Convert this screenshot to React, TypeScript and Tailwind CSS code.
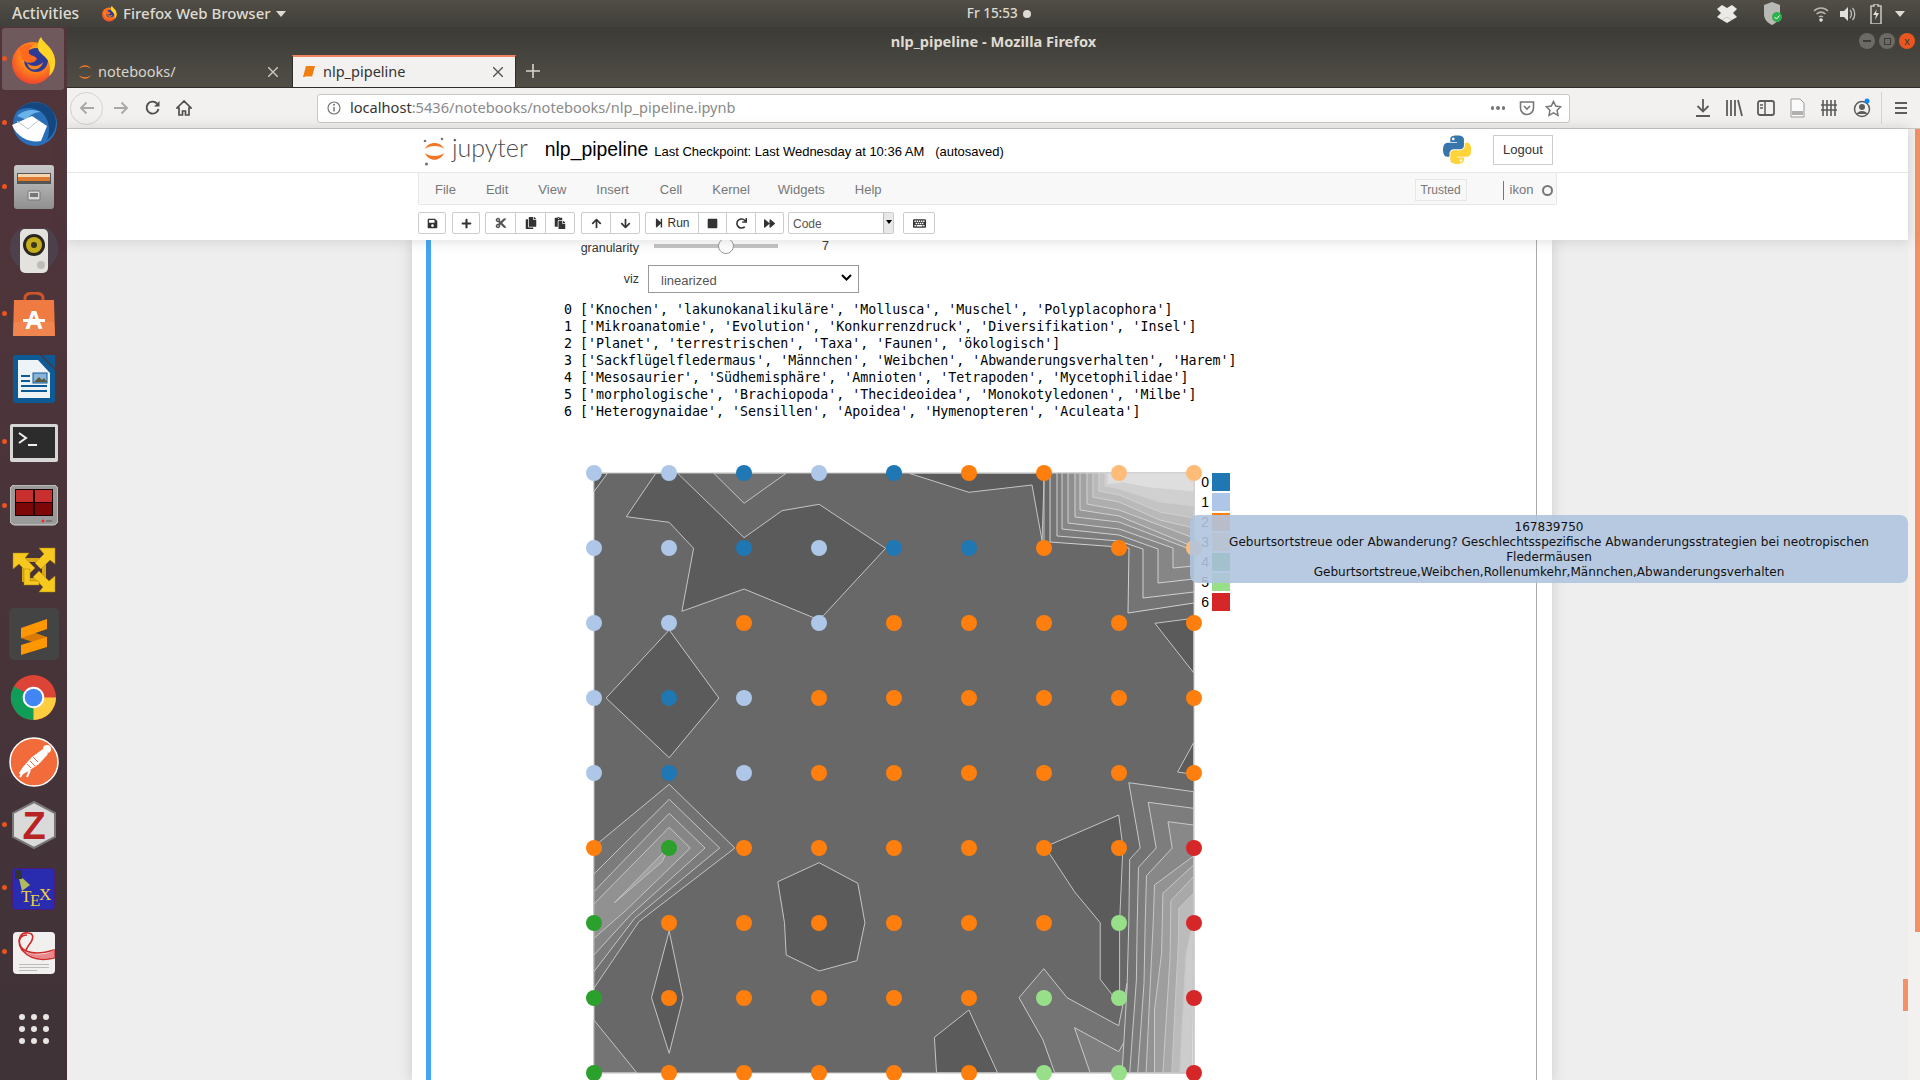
import React from "react";
import { FaSave, FaPlus, FaCut, FaCopy, FaPaste, FaArrowUp, FaArrowDown, FaStepForward, FaStop, FaRedo, FaForward, FaKeyboard } from "react-icons/fa";

type P = [number, number];
const z7 = (p: P): P => [580 + p[0] / 2.376, 450 + p[1] / 3];
const z8 = (p: P): P => [580 + p[0] / 2.376, 750 + p[1] / 3];
const str = (pts: P[]) => pts.map((p) => `${p[0].toFixed(1)},${p[1].toFixed(1)}`).join(" ");

const DARK = "#5b5b5b";
const darkPolys: P[][] = [
  [[33, 70], [65, 70], [33, 125]].map((p) => z7(p as P)),
  [[180, 70], [110, 200], [212, 217], [270, 295], [242, 484], [390, 417], [555, 503], [578, 497], [726, 295], [568, 163], [480, 182], [390, 263], [232, 70]].map((p) => z7(p as P)),
  [[782, 70], [924, 127], [1074, 105], [1098, 272], [1103, 70]].map((p) => z7(p as P)),
  [[212, 540], [330, 744], [212, 923], [62, 744]].map((p) => z7(p as P)),
  [[1366, 520], [1458, 505], [1458, 668]].map((p) => z7(p as P)),
  [[1458, 878], [1420, 966], [1458, 973]].map((p) => z7(p as P)),
  [[470, 395], [568, 338], [660, 400], [677, 518], [658, 632], [568, 663], [490, 615], [486, 518]].map((p) => z8(p as P)),
  [[212, 543], [245, 743], [212, 910], [170, 743]].map((p) => z8(p as P)),
  [[1115, 285], [1280, 195], [1290, 290], [1282, 518], [1282, 730], [1265, 735], [1236, 688], [1236, 518], [1175, 425], [1115, 310]].map((p) => z8(p as P)),
  [[842, 862], [924, 780], [992, 968], [847, 968]].map((p) => z8(p as P)),
];

const topRight: P[][] = [
  [[1050, 473], [1050, 542], [1119, 547], [1129, 548], [1128, 613], [1194, 603]],
  [[1057, 473], [1057, 536], [1119, 541], [1143, 549], [1143, 598], [1194, 592]],
  [[1062, 473], [1062, 529], [1119, 535], [1158, 549], [1158, 583], [1194, 579]],
  [[1068, 473], [1068, 523], [1119, 529], [1173, 548], [1173, 568], [1194, 566]],
  [[1075, 473], [1075, 517], [1119, 522], [1187, 548], [1194, 553]],
  [[1080, 473], [1080, 510], [1119, 516], [1194, 547]],
  [[1087, 473], [1087, 504], [1119, 510], [1194, 538]],
  [[1093, 473], [1093, 497], [1119, 502], [1160, 520], [1194, 528]],
  [[1099, 473], [1099, 491], [1119, 495], [1160, 512], [1194, 518]],
  [[1105, 473], [1105, 486], [1120, 489], [1160, 502], [1194, 506]],
  [[1107, 473], [1107, 485], [1123, 483], [1150, 488], [1194, 492]],
];
const trColors = ["#747474", "#7d7d7d", "#868686", "#8f8f8f", "#989898", "#a3a3a3", "#aeaeae", "#b9b9b9", "#c4c4c4", "#d0d0d0", "#dedede"];

const leftDiamonds: { pts: P[]; fill: string }[] = [
  { pts: [[33, 290], [212, 103], [368, 294], [140, 515], [33, 715]], fill: "#727272" },
  { pts: [[33, 372], [212, 148], [332, 294], [130, 505], [33, 665]], fill: "#7c7c7c" },
  { pts: [[33, 425], [212, 190], [297, 294], [120, 495], [33, 615]], fill: "#868686" },
  { pts: [[33, 462], [212, 232], [262, 294], [110, 480], [33, 565]], fill: "#919191" },
  { pts: [[82, 458], [212, 290], [195, 335]], fill: "#a0a0a0" },
];

const rightRegions: { pts: P[]; fill: string }[] = [
  { pts: [[1043, 743], [1102, 656], [1157, 743], [1280, 827], [1300, 700], [1300, 968], [1128, 968], [1100, 870]], fill: "#747474" },
  { pts: [[1175, 833], [1280, 905], [1300, 860], [1300, 968], [1212, 968]], fill: "#7e7e7e" },
  { pts: [[1458, 125], [1304, 98], [1331, 294], [1306, 328], [1304, 518], [1300, 710], [1288, 968], [1458, 968]], fill: "#737373" },
  { pts: [[1458, 175], [1350, 157], [1369, 294], [1327, 352], [1324, 518], [1322, 690], [1306, 968], [1458, 968]], fill: "#7d7d7d" },
  { pts: [[1458, 225], [1397, 215], [1407, 294], [1346, 377], [1343, 518], [1340, 700], [1325, 968], [1458, 968]], fill: "#888888" },
  { pts: [[1458, 318], [1365, 405], [1362, 518], [1355, 700], [1345, 968], [1458, 968]], fill: "#939393" },
  { pts: [[1458, 345], [1385, 430], [1382, 610], [1365, 780], [1365, 968], [1458, 968]], fill: "#9e9e9e" },
  { pts: [[1458, 380], [1404, 452], [1402, 620], [1385, 968], [1458, 968]], fill: "#a9a9a9" },
  { pts: [[1458, 430], [1423, 475], [1422, 565], [1406, 968], [1458, 968]], fill: "#bbbbbb" },
  { pts: [[1458, 510], [1440, 610], [1425, 968], [1458, 968]], fill: "#cccccc" },
  { pts: [[1458, 540], [1452, 968], [1458, 968]], fill: "#dcdcdc" },
];

const B = "#1f77b4", LB = "#aec7e8", O = "#ff7f0e", LO = "#ffbb78", G = "#2ca02c", LG = "#98df8a", R = "#d62728";
const dots = [
  [LB, LB, B, LB, B, O, O, LO, LO],
  [LB, LB, B, LB, B, B, O, O, LO],
  [LB, LB, O, LB, O, O, O, O, O],
  [LB, B, LB, O, O, O, O, O, O],
  [LB, B, LB, O, O, O, O, O, O],
  [O, G, O, O, O, O, O, O, R],
  [G, O, O, O, O, O, O, LG, R],
  [G, O, O, O, O, O, LG, LG, R],
  [G, O, O, O, O, O, LG, LG, R],
];
const legend = [B, LB, O, LO, G, LG, R];

function Plot() {
  const line = { stroke: "#c4c4c4", strokeWidth: 1 };
  return (
    <svg width={660} height={620} viewBox="580 460 660 620" className="block">
      <rect x={594} y={473} width={600} height={600} fill="#686868" stroke="#c8c8c8" strokeWidth={1} />
      {darkPolys.map((p, i) => <polygon key={i} points={str(p)} fill={DARK} {...line} />)}
      <polygon points={str([[318, 70], [390, 160], [490, 70]].map((p) => z7(p as P)))} fill="#707070" {...line} />
      <polygon points={str([[33, 810], [135, 968], [33, 968]].map((p) => z8(p as P)))} fill="#747474" {...line} />
      {leftDiamonds.map((d, i) => <polygon key={i} points={str(d.pts.map(z8))} fill={d.fill} {...line} />)}
      {rightRegions.map((d, i) => <polygon key={i} points={str(d.pts.map(z8))} fill={d.fill} stroke="#c8c8c8" strokeWidth={1} />)}
      {topRight.map((pts, i) => <polygon key={i} points={str([...pts, [1194, 473]])} fill={trColors[i]} stroke="#d0d0d0" strokeWidth={1} />)}
      <line x1={1044} y1={473} x2={1044} y2={541} {...line} />
      {dots.map((row, r) => row.map((c, k) => <circle key={`${r}-${k}`} cx={594 + k * 75} cy={473 + r * 75} r={8} fill={c} />))}
      {legend.map((c, i) => (
        <g key={i}>
          <rect x={1212} y={473 + i * 20} width={18} height={18} fill={c} />
          <text x={1209} y={487 + i * 20} textAnchor="end" fontSize={14} fontFamily="'Liberation Sans', sans-serif" fill="#000">{i}</text>
        </g>
      ))}
    </svg>
  );
}

const lines = [
  "0 ['Knochen', 'lakunokanalikuläre', 'Mollusca', 'Muschel', 'Polyplacophora']",
  "1 ['Mikroanatomie', 'Evolution', 'Konkurrenzdruck', 'Diversifikation', 'Insel']",
  "2 ['Planet', 'terrestrischen', 'Taxa', 'Faunen', 'ökologisch']",
  "3 ['Sackflügelfledermaus', 'Männchen', 'Weibchen', 'Abwanderungsverhalten', 'Harem']",
  "4 ['Mesosaurier', 'Südhemisphäre', 'Amnioten', 'Tetrapoden', 'Mycetophilidae']",
  "5 ['morphologische', 'Brachiopoda', 'Thecideoidea', 'Monokotyledonen', 'Milbe']",
  "6 ['Heterogynaidae', 'Sensillen', 'Apoidea', 'Hymenopteren', 'Aculeata']",
];

/* ---------- dock icons ---------- */
const Firefox = ({ s = 50, id = "ffa" }: { s?: number; id?: string }) => (
  <svg width={s} height={s} viewBox="0 0 50 50">
    <defs>
      <radialGradient id={id} cx="0.55" cy="0.35" r="0.8"><stop offset="0" stopColor="#ffcb2f" /><stop offset="0.5" stopColor="#ff7b1c" /><stop offset="1" stopColor="#e3263c" /></radialGradient>
    </defs>
    <circle cx="24" cy="28" r="21" fill={`url(#${id})`} />
    <circle cx="27" cy="25" r="12" fill="#2f3a94" />
    <path d="M32 2c2 6 12 10 14 22 1 8-2 14-6 17 2-8 1-15-5-20-3-3-7-5-6-11 0-3 1-6 3-8z" fill="#ffd426" />
    <path d="M10 14c4-4 10-6 14-4-2 3-5 4-4 8 1 3 6 2 8 6-4 6-14 5-16-3-1-3-1-5-2-7z" fill="#ff6a1f" />
    <path d="M18 28c4 4 12 4 16-1-1 6-7 9-12 7-2-1-3-3-4-6z" fill="#f6841f" />
  </svg>
);
const Thunderbird = () => (
  <svg width="50" height="50" viewBox="0 0 50 50">
    <circle cx="26" cy="25" r="22" fill="#2a6fb8" />
    <path d="M8 12c8-10 24-12 34-2 8 9 6 24-4 31 4-10 2-22-6-28-8-5-16-5-24-1z" fill="#14477f" />
    <path d="M8 17c6-6 16-8 24-4-6 0-12 3-14 8z" fill="#6ab3e8" />
    <path d="M3 26l20-9 15 10-6 15c-10 2-24-3-29-16z" fill="#fff" />
    <path d="M8 22l11 8 11-9" fill="none" stroke="#b9c4d1" strokeWidth="1" />
  </svg>
);
const FilesIcon = () => (
  <svg width="42" height="46" viewBox="0 0 42 46">
    <defs><linearGradient id="fg" x1="0" y1="0" x2="0" y2="1"><stop offset="0" stopColor="#c9c9c9" /><stop offset="1" stopColor="#8f8f8f" /></linearGradient></defs>
    <rect x="1" y="1" width="40" height="44" rx="3" fill="url(#fg)" />
    <rect x="4" y="9" width="34" height="11" fill="#555" />
    <rect x="5" y="10" width="32" height="3" fill="#f3d5b0" />
    <rect x="5" y="13" width="32" height="4" fill="#dd7a32" />
    <rect x="15" y="27" width="12" height="9" rx="1" fill="#d8d8d8" stroke="#777" />
    <rect x="17" y="29" width="8" height="4" fill="#777" />
  </svg>
);
const Speaker = () => (
  <svg width="54" height="46" viewBox="0 0 54 46">
    <circle cx="27" cy="20" r="24" fill="#4e4f66" opacity="0.45" />
    <rect x="13" y="1" width="28" height="44" rx="5" fill="#e4e2dc" />
    <circle cx="27" cy="17" r="11" fill="#29271e" />
    <circle cx="27" cy="17" r="8" fill="#c4ac1d" />
    <circle cx="27" cy="17" r="3" fill="#3b381f" />
    <circle cx="34" cy="37" r="4" fill="#bfbdb6" />
  </svg>
);
const Bag = () => (
  <svg width="46" height="46" viewBox="0 0 46 46">
    <path d="M14 10V6c0-3 3-5 9-5s9 2 9 5v4" fill="none" stroke="#c9562a" strokeWidth="3" />
    <path d="M3 8h40l1 36H2z" fill="#ef7b42" />
    <path d="M3 30h40l1 14H2z" fill="#f0854f" />
    <text x="23" y="37" textAnchor="middle" fontSize="25" fontWeight="700" fill="#fff" fontFamily="'Liberation Sans', sans-serif">A</text>
    <rect x="12" y="27" width="22" height="3" fill="#fff" />
  </svg>
);
const Writer = () => (
  <svg width="42" height="48" viewBox="0 0 42 48">
    <path d="M3 0h24l15 15v30a3 3 0 0 1-3 3H3a3 3 0 0 1-3-3V3a3 3 0 0 1 3-3z" fill="#0d5a94" />
    <path d="M29 0h13v13z" fill="#0d5a94" />
    <path d="M5 5h20l12 13v25H5z" fill="#eef3f8" />
    <rect x="8" y="20" width="9" height="2" fill="#0d5a94" /><rect x="8" y="25" width="9" height="2" fill="#0d5a94" />
    <rect x="8" y="30" width="26" height="2" fill="#0d5a94" /><rect x="8" y="35" width="26" height="2" fill="#0d5a94" />
    <rect x="20" y="18" width="14" height="10" fill="#8ab4d8" stroke="#0d5a94" /><path d="M21 27l5-5 3 3 2-2 3 4z" fill="#5d5a3a" />
  </svg>
);
const Terminal = () => (
  <svg width="48" height="38" viewBox="0 0 48 38">
    <rect x="0" y="0" width="48" height="38" rx="2" fill="#d6d6d6" />
    <rect x="3" y="3" width="42" height="31" fill="#2c2c2c" />
    <polyline points="9,9 16,14 9,19" fill="none" stroke="#f0f0f0" strokeWidth="2" />
    <rect x="18" y="20" width="9" height="2" fill="#f0f0f0" />
  </svg>
);
const RedGrid = () => (
  <svg width="48" height="42" viewBox="0 0 48 42">
    <rect x="0" y="0" width="48" height="40" rx="5" fill="#9a9a9a" stroke="#d8d8d8" />
    <rect x="5" y="4" width="38" height="27" fill="#1e0505" />
    <rect x="6" y="5" width="17" height="12" fill="#c83030" /><rect x="25" y="5" width="17" height="12" fill="#c83030" />
    <rect x="6" y="18" width="17" height="12" fill="#7d0606" /><rect x="25" y="18" width="17" height="12" fill="#7d0606" />
    <circle cx="33" cy="36" r="1.5" fill="#e03030" /><rect x="36" y="35" width="6" height="2" fill="#777" />
  </svg>
);
const Vmware = () => (
  <svg width="44" height="46" viewBox="0 0 44 46">
    <rect x="12" y="13" width="20" height="20" fill="none" stroke="#d9a916" strokeWidth="4" />
    <g fill="#f7c81e" stroke="#a98708" strokeWidth="0.5">
      <polygon points="1,6 17,6 13,11 23,21 17,27 7,17 1,22" />
      <polygon points="43,1 43,17 38,13 29,22 23,16 32,7 27,1" />
      <polygon points="43,45 27,45 31,40 21,30 27,24 37,34 43,29" />
    </g>
    <polygon points="12,22 18,22 18,34 27,34 27,38 12,38" fill="#f7c81e" stroke="#a98708" strokeWidth="0.5" />
  </svg>
);
const Sublime = () => (
  <svg width="50" height="52" viewBox="0 0 50 52">
    <rect x="0" y="0" width="50" height="52" rx="5" fill="#444444" />
    <polygon points="12,20 38,29 38,39 12,30" fill="#d97a05" />
    <polygon points="12,20 38,11 38,21 12,30" fill="#ff9800" />
    <polygon points="12,37 38,29 38,39 12,47" fill="#ff9800" />
  </svg>
);
const Chrome = () => (
  <svg width="47" height="47" viewBox="0 0 48 48">
    <circle cx="24" cy="24" r="23" fill="#db4437" />
    <path d="M24 24L4 12.5A23 23 0 0 0 24 47z" fill="#0f9d58" />
    <path d="M24 24h23A23 23 0 0 1 24 47z" fill="#ffcd40" />
    <circle cx="24" cy="24" r="11" fill="#fff" />
    <circle cx="24" cy="24" r="9" fill="#4285f4" />
  </svg>
);
const Postman = () => (
  <svg width="50" height="50" viewBox="0 0 50 50">
    <circle cx="25" cy="25" r="24" fill="#f26b3a" stroke="#fff" strokeWidth="1.5" />
    <path d="M34 12l5 5-9 10-12 8-6 3-2-2 4-6 9-10z" fill="#fff" />
    <circle cx="38" cy="12" r="4" fill="#fff" />
    <path d="M15 34l-4 6M21 33l-3 7" stroke="#fff" strokeWidth="2" />
    <path d="M24 20l5 5M21 24l5 5M18 27l4 4" stroke="#f26b3a" strokeWidth="1" />
  </svg>
);
const Zotero = () => (
  <svg width="44" height="48" viewBox="0 0 44 48">
    <polygon points="22,1 43,12 43,36 22,47 1,36 1,12" fill="#dadada" stroke="#777" strokeWidth="2" />
    <text x="22" y="38" textAnchor="middle" fontSize="38" fontWeight="700" fontFamily="'Liberation Sans', sans-serif" fill="#b82424">Z</text>
  </svg>
);
const Tex = () => (
  <svg width="43" height="42" viewBox="0 0 43 42">
    <rect x="0.5" y="0.5" width="42" height="41" rx="3" fill="#2a2cb0" stroke="#4b1a7c" />
    <path d="M6 6l12 11-8 6z" fill="#d3e04a" opacity="0.8" />
    <rect x="3" y="2" width="7" height="9" fill="#333" />
    <text x="9" y="34" fontSize="17" fill="#f3d13d" fontFamily="'Liberation Serif', serif">T</text>
    <text x="18" y="38" fontSize="17" fill="#f3d13d" fontFamily="'Liberation Serif', serif">E</text>
    <text x="27" y="32" fontSize="17" fill="#f3d13d" fontFamily="'Liberation Serif', serif">X</text>
  </svg>
);
const PdfIcon = () => (
  <svg width="42" height="42" viewBox="0 0 42 42">
    <rect width="42" height="42" rx="4" fill="#f1f0ee" />
    <path d="M14 3c-6 0-10 5-6 12 4 5 14 9 33 3v8c-12 3-24 1-32-8C3 9 7 0 15 1c5 0 6 4 3 9-3 4-5 7-6 11" fill="none" stroke="#cf2a2a" strokeWidth="1.6" />
    <path d="M10 18c8 6 22 6 31 0v7c-12 3-22 2-31-7z" fill="#e9878a" />
    <rect x="6" y="32" width="30" height="1" fill="#bbb" /><rect x="6" y="35" width="30" height="1" fill="#bbb" /><rect x="6" y="38" width="18" height="1" fill="#bbb" />
  </svg>
);

const dock: { el: React.ReactNode; dot?: boolean }[] = [
  { el: <Firefox />, dot: true }, { el: <Thunderbird />, dot: true }, { el: <FilesIcon />, dot: true },
  { el: <Speaker /> }, { el: <Bag />, dot: true }, { el: <Writer /> },
  { el: <Terminal />, dot: true }, { el: <RedGrid />, dot: true }, { el: <Vmware /> },
  { el: <Sublime /> }, { el: <Chrome /> }, { el: <Postman /> },
  { el: <Zotero />, dot: true }, { el: <Tex />, dot: true }, { el: <PdfIcon />, dot: true },
];

function Sidebar() {
  return (
    <div className="w-[67px] shrink-0 flex flex-col bg-gradient-to-b from-[#52353b] to-[#3f3338] pt-[1px]">
      {dock.map((d, i) => (
        <div key={i} className="relative h-[63.8px] shrink-0 flex items-center justify-center">
          {i === 0 && <div className="absolute left-[2px] top-0 w-[62px] h-[62px] rounded-[3px] bg-[#6f595c]" />}
          {d.dot && <div className="absolute left-[2px] top-[28px] w-[5px] h-[5px] rounded-full bg-[#e95420]" />}
          <div className="relative flex items-center justify-center">{d.el}</div>
        </div>
      ))}
      <div className="mt-[29px] ml-[19px] grid grid-cols-3 gap-[6px] w-[30px]">
        {Array.from({ length: 9 }).map((_, i) => <div key={i} className="w-[6px] h-[6px] rounded-full bg-[#e8e6e3]" />)}
      </div>
    </div>
  );
}

function TopPanel() {
  return (
    <div className="h-[27px] shrink-0 flex items-center relative bg-gradient-to-b from-[#514e47] to-[#403f39] text-[#dfdbd2] font-['Noto_Sans',sans-serif] text-[15px] font-medium">
      <span className="ml-[12px] w-[89px] text-[15.6px]">Activities</span>
      <Firefox s={17} id="ffb" />
      <span className="ml-[5px]">Firefox Web Browser</span>
      <svg width="10" height="6" className="ml-[5px]"><path d="M0 0h10L5 6z" fill="#dfdbd2" /></svg>
      <div className="flex-1 flex justify-center items-center gap-[5px] text-[13.5px] pr-[5px]">
        <span>Fr 15:53</span><span className="w-[8px] h-[8px] rounded-full bg-[#dfdbd2]" />
      </div>
      <div className="flex items-center mr-[15px]">
        <svg width="20" height="18" viewBox="0 0 20 18" className="mr-[27px]"><path d="M0 4l5-4 5 3 5-3 5 4-4 4 4 4-5 3-5-3-5 3-5-3 4-4z" fill="#eceae6" /><path d="M5 15l5 3 5-3-5-3z" fill="#eceae6" /></svg>
        <svg width="20" height="24" viewBox="0 0 20 24" className="mr-[29px]"><path d="M8 0l8 3v9c0 6-4 9-8 11-4-2-8-5-8-11V3z" fill="#b8b8b4" /><circle cx="13" cy="15" r="5" fill="#2bb24c" /><path d="M10.5 15l2 2 3-3.5" stroke="#fff" strokeWidth="1" fill="none" /></svg>
        <svg width="16" height="16" viewBox="0 0 16 16" className="mr-[11px]"><path d="M1 5c4-4 10-4 14 0M3.500 8c3-2.500 6-2.500 9 0M6 11c1.300-1 2.700-1 4 0" stroke="#b8b6b0" strokeWidth="1.500" fill="none" /><circle cx="8" cy="14" r="1.800" fill="#e2e0da" /></svg>
        <svg width="16" height="16" viewBox="0 0 16 16" className="mr-[14px]"><path d="M0 5h4l4-4v14l-4-4H0z" fill="#e2e0da" /><path d="M10 4c2 2 2 6 0 8M12.500 2c3 3 3 9 0 12" stroke="#c4c2bc" strokeWidth="1.300" fill="none" /></svg>
        <svg width="12" height="20" viewBox="0 0 12 20" className="mr-[13px]"><path d="M4 0h4v2h3v18H1V2h3z" fill="none" stroke="#c9c7c1" strokeWidth="1.500" /><path d="M7 5L3 11h3l-1 5 4-7H6z" fill="#e2e0da" /></svg>
        <svg width="10" height="6"><path d="M0 0h10L5 6z" fill="#dfdbd2" /></svg>
      </div>
    </div>
  );
}

function JupyterLogo() {
  return (
    <svg width="26" height="32" viewBox="0 0 26 32">
      <path d="M3 13C6 5 19 5 22 13C18 9 7 9 3 13Z" fill="#f37726" />
      <path d="M3 17C7 21 18 21 22 17C19 26 6 26 3 17Z" fill="#f37726" />
      <circle cx="3" cy="5" r="1.300" fill="#767677" /><circle cx="20" cy="3" r="1.300" fill="#767677" /><circle cx="4.500" cy="28" r="1.600" fill="#767677" />
    </svg>
  );
}

function PythonLogo() {
  return (
    <svg width="28" height="29" viewBox="0 0 110 110">
      <path fill="#3776ab" d="M54.919 0.001c-4.584.022-8.961.413-12.813 1.095C30.76 3.099 28.7 7.295 28.7 15.032v10.219h26.813v3.406H28.7H18.638c-7.793 0-14.616 4.684-16.75 13.594-2.462 10.213-2.571 16.586 0 27.25 1.906 7.938 6.458 13.594 14.25 13.594h9.219v-12.25c0-8.85 7.657-16.656 16.75-16.656h26.781c7.454 0 13.406-6.138 13.406-13.625V15.032c0-7.266-6.13-12.725-13.406-13.937C64.282.328 59.502-.02 54.919.001zm-14.5 8.219c2.77 0 5.031 2.299 5.031 5.125 0 2.816-2.262 5.094-5.031 5.094-2.78 0-5.031-2.277-5.031-5.094 0-2.826 2.252-5.125 5.031-5.125z" />
      <path fill="#ffd43b" d="M85.638 28.657v11.906c0 9.231-7.826 17-16.75 17H42.106c-7.336 0-13.406 6.278-13.406 13.625v25.531c0 7.266 6.319 11.54 13.406 13.625 8.487 2.496 16.626 2.947 26.781 0 6.75-1.954 13.406-5.888 13.406-13.625V86.5H55.513v-3.405h40.188c7.793 0 10.696-5.436 13.406-13.594 2.799-8.399 2.68-16.476 0-27.25-1.926-7.757-5.604-13.594-13.406-13.594zM70.575 93.313c2.78 0 5.031 2.277 5.031 5.094 0 2.826-2.252 5.125-5.031 5.125-2.77 0-5.031-2.299-5.031-5.125 0-2.817 2.262-5.094 5.031-5.094z" />
    </svg>
  );
}

const TbBtn = ({ children, w = 29, last }: { children: React.ReactNode; w?: number; last?: boolean }) => (
  <div style={{ width: w }} className={`h-full flex items-center justify-center text-[#333] text-[12px] ${last ? "" : "border-r border-[#ccc]"}`}>{children}</div>
);
const Group = ({ children, cls }: { children: React.ReactNode; cls: string }) => (
  <div className={`h-[22px] flex border border-[#ccc] rounded-[2px] bg-white ${cls}`}>{children}</div>
);

function Header() {
  return (
    <div className="relative z-10 h-[111px] shrink-0 bg-white shadow-[0_0_12px_1px_rgba(87,87,87,0.2)] font-['Liberation_Sans',sans-serif]">
      <div className="h-[44px] border-b border-[#e7e7e7] flex items-center">
        <div className="ml-[355px] w-[26px] mt-[3px]"><JupyterLogo /></div>
        <span className="ml-[4px] text-[25px] leading-none text-[#4e4e4e] font-['Lato',sans-serif] font-light mb-[6px]">jupyter</span>
        <span className="ml-[17px] text-[19.4px] text-black -mt-[1px]">nlp_pipeline</span>
        <span className="ml-[6px] mt-[2px] text-[13px] text-black whitespace-pre">Last Checkpoint: Last Wednesday at 10:36 AM   (autosaved)</span>
        <div className="flex-1" />
        <div className="-mt-[2px]"><PythonLogo /></div>
        <div className="ml-[22px] mr-[355px] -mt-[2px] w-[60px] h-[30px] border border-[#ccc] flex items-center justify-center text-[13px] text-[#333]">Logout</div>
      </div>
      <div className="ml-[351px] w-[1139px] h-[32px] flex items-center pt-[3px] bg-[#f8f8f8] border border-t-0 border-[#e7e7e7] rounded-b-[2px] text-[13px] text-[#777] relative">
        <span className="ml-[16px]">File</span>
        <span className="ml-[30px]">Edit</span>
        <span className="ml-[30px]">View</span>
        <span className="ml-[30px]">Insert</span>
        <span className="ml-[31px]">Cell</span>
        <span className="ml-[30px]">Kernel</span>
        <span className="ml-[28px]">Widgets</span>
        <span className="ml-[30px]">Help</span>
        <div className="ml-[533px] w-[52px] h-[22px] -mt-[1px] border border-[#e7e7e7] flex items-center justify-center text-[12px] text-[#777]">Trusted</div>
        <div className="ml-[36px] w-[1px] h-[19px] bg-[#777]" />
        <span className="ml-[6px]">ikon</span>
        <div className="ml-[9px] w-[11px] h-[11px] rounded-full border-2 border-[#777]" />
      </div>
      <div className="ml-[351px] mt-[7px] flex items-center">
        <Group cls="w-[28px]"><TbBtn w={26} last><FaSave size={11} /></TbBtn></Group>
        <Group cls="ml-[6px] w-[28px]"><TbBtn w={26} last><FaPlus size={11} /></TbBtn></Group>
        <Group cls="ml-[5px]"><TbBtn w={30}><FaCut size={12} className="text-[#555]" /></TbBtn><TbBtn w={30}><FaCopy size={12} /></TbBtn><TbBtn w={28} last><FaPaste size={12} /></TbBtn></Group>
        <Group cls="ml-[6px]"><TbBtn w={29}><FaArrowUp size={11} /></TbBtn><TbBtn w={28} last><FaArrowDown size={11} /></TbBtn></Group>
        <Group cls="ml-[5px]">
          <TbBtn w={53}><FaStepForward size={10} /><span className="ml-[3px]">Run</span></TbBtn>
          <TbBtn w={28}><FaStop size={11} /></TbBtn><TbBtn w={29}><FaRedo size={11} /></TbBtn><TbBtn w={27} last><FaForward size={11} /></TbBtn>
        </Group>
        <div className="ml-[4px] w-[106px] h-[22px] border border-[#ccc] rounded-[2px] bg-white flex items-center justify-between text-[12px] text-[#555]">
          <span className="ml-[4px] mt-[2px]">Code</span>
          <div className="w-[10px] h-[20px] bg-[#e8e8e8] border-l border-[#bbb] flex justify-center pt-[7px]"><svg width="6" height="4"><path d="M0 0h6L3 4z" fill="#000" /></svg></div>
        </div>
        <Group cls="ml-[9px] w-[32px]"><TbBtn w={30} last><FaKeyboard size={13} /></TbBtn></Group>
      </div>
    </div>
  );
}

function Notebook() {
  return (
    <div className="flex-1 min-h-0 bg-[#eeeeee] overflow-hidden">
      <div className="ml-[345px] w-[1140px] h-full bg-white shadow-[0_0_12px_1px_rgba(87,87,87,0.2)] pl-[14px]">
        <div className="w-[1111px] h-full border-r border-[#ababab] border-l-[5px] border-l-[#42a5f5] pl-[1px] font-['Liberation_Sans',sans-serif] overflow-hidden">
          <div className="h-[24px] flex items-center relative -mt-[6px]">
            <span className="w-[207px] text-right text-[12.5px] text-[#333] mt-[4px]">granularity</span>
            <div className="ml-[15px] w-[124px] h-[4px] bg-[#c4c4c4] relative">
              <div className="absolute left-[64px] -top-[6px] w-[16px] h-[16px] rounded-full bg-white border border-[#999]" />
            </div>
            <span className="ml-[44px] text-[12.5px] text-[#333]">7</span>
          </div>
          <div className="h-[28px] flex items-center mt-[7px]">
            <span className="w-[207px] text-right text-[12.5px] text-[#333]">viz</span>
            <div className="ml-[9px] w-[211px] h-[28px] border border-[#999] bg-white flex items-center justify-between text-[13px] text-[#555]">
              <span className="ml-[12px] mt-[3px]">linearized</span>
              <svg width="11" height="7" viewBox="0 0 11 7" className="mr-[6px] -mt-[3px]"><path d="M1 1l4.500 4.500L10 1" stroke="#000" strokeWidth="2" fill="none" /></svg>
            </div>
          </div>
          <pre className="mt-[8px] ml-[132px] font-['DejaVu_Sans_Mono',monospace] text-[13.3px] leading-[17px] text-black">{lines.join("\n")}</pre>
          <div className="ml-[148px] mt-[40px]"><Plot /></div>
        </div>
      </div>
    </div>
  );
}

function NavIcons() {
  const c = "#5c5c5c";
  return (
    <div className="flex items-center">
      <svg width="18" height="20" viewBox="0 0 18 20"><path d="M9 1v12M3.500 8L9 13.500 14.500 8" stroke={c} strokeWidth="1.800" fill="none" /><rect x="2" y="17" width="14" height="2" fill={c} /></svg>
      <svg width="18" height="18" viewBox="0 0 18 18" className="ml-[13px]"><path d="M2 1v16M6 1v16M10 1v16M13 1l4 16" stroke={c} strokeWidth="1.800" fill="none" /></svg>
      <svg width="18" height="16" viewBox="0 0 18 16" className="ml-[14px]"><rect x="1" y="1" width="16" height="14" rx="2" fill="none" stroke={c} strokeWidth="1.800" /><path d="M8 1v14M3 5h3M3 8h3" stroke={c} strokeWidth="1.500" /></svg>
      <svg width="15" height="20" viewBox="0 0 15 20" className="ml-[15px]"><path d="M1 1h9l4 4v14H1z" fill="#fafafa" stroke="#9a9a9a" /><rect x="2" y="13" width="11" height="4" fill="#b0b0b0" /></svg>
      <svg width="16" height="18" viewBox="0 0 16 18" className="ml-[16px]"><path d="M2 1v16M6 1v16M10 1v16M14 1v16M0 6h16M0 11h16" stroke={c} strokeWidth="1.600" fill="none" /></svg>
      <svg width="18" height="20" viewBox="0 0 18 20" className="ml-[16px]"><circle cx="9" cy="11" r="7.500" fill="none" stroke={c} strokeWidth="1.500" /><circle cx="9" cy="9" r="3" fill={c} /><path d="M3.500 16c2-4 9-4 11 0z" fill={c} /><circle cx="14" cy="3" r="2.500" fill="#0a84ff" /></svg>
      <div className="ml-[10px] w-[1px] h-[32px] bg-[#d4d3d1]" />
      <svg width="14" height="12" viewBox="0 0 14 12" className="ml-[12px]"><path d="M1 1h12M1 6h12M1 11h12" stroke={c} strokeWidth="1.800" /></svg>
    </div>
  );
}

export default function App() {
  return (
    <div className="relative w-[1920px] h-[1080px] overflow-hidden flex flex-col bg-white">
      <TopPanel />
      <div className="flex-1 flex min-h-0">
        <Sidebar />
        <div className="flex-1 min-w-0 flex flex-col">
          <div className="h-[61px] shrink-0 flex flex-col bg-gradient-to-b from-[#3c3b37] to-[#514e46] border-b border-[#2e2d2a]">
            <div className="h-[28px] flex items-center relative">
              <div className="w-[61px] shrink-0" />
              <div className="flex-1 text-center text-[14.6px] font-bold text-[#dfdbd2] font-['Noto_Sans',sans-serif] leading-[28px]">nlp_pipeline - Mozilla Firefox</div>
              <div className="w-[61px] shrink-0 flex items-center gap-[4px]">
                <div className="w-[16px] h-[16px] rounded-full bg-[#6b6a65] flex items-center justify-center"><div className="w-[8px] h-[2px] bg-[#3c3b37]" /></div>
                <div className="w-[16px] h-[16px] rounded-full bg-[#6b6a65] flex items-center justify-center"><div className="w-[7px] h-[7px] border border-[#3c3b37]" /></div>
                <div className="w-[16px] h-[16px] rounded-full bg-[#e9561f] flex items-center justify-center text-[#3c3b37] text-[11px] leading-none font-['Liberation_Sans',sans-serif]">x</div>
              </div>
            </div>
            <div className="flex-1 flex items-stretch font-['Noto_Sans',sans-serif] text-[14.5px]">
              <div className="w-[225px] flex items-center text-[#d8d5cd] relative pt-[1px]">
                <svg width="16" height="18" viewBox="0 0 16 18" className="ml-[10px]"><path d="M2 6C4 1 12 1 14 6C11 3 5 3 2 6Z" fill="#f37726" /><path d="M2 12C5 15 11 15 14 12C12 17 4 17 2 12Z" fill="#f37726" /></svg>
                <span className="ml-[5px]">notebooks/</span>
                <svg width="10" height="10" className="absolute right-[14px]"><path d="M0 0l10 10M10 0L0 10" stroke="#c9c7c0" strokeWidth="1.400" /></svg>
              </div>
              <div className="w-[224px] flex items-center bg-[#f2f1ef] border-t-[2px] border-[#ee8460] text-[#333] relative border-x border-x-[#2e2d2a]">
                <svg width="14" height="14" viewBox="0 0 14 14" className="ml-[9px]"><path d="M4 1h9l-3 11H1z" fill="#f07f13" /><path d="M3 12h7" stroke="#fff" strokeWidth="1" /></svg>
                <span className="ml-[7px]">nlp_pipeline</span>
                <svg width="10" height="10" className="absolute right-[12px]"><path d="M0 0l10 10M10 0L0 10" stroke="#555" strokeWidth="1.400" /></svg>
              </div>
              <svg width="14" height="14" className="ml-[10px] self-center"><path d="M7 0v14M0 7h14" stroke="#d8d5cd" strokeWidth="1.600" /></svg>
            </div>
          </div>
          <div className="h-[41px] shrink-0 bg-[#f2f1ef] border-b border-[#c9c8c5] flex items-center font-['Noto_Sans',sans-serif]">
            <div className="ml-[3px] w-[33px] h-[33px] rounded-full border border-[#d3d2cf] flex items-center justify-center">
              <svg width="16" height="14" viewBox="0 0 16 14"><path d="M15 7H2M7.500 1.500L2 7l5.500 5.500" stroke="#a8a8a8" strokeWidth="1.800" fill="none" /></svg>
            </div>
            <svg width="16" height="14" viewBox="0 0 16 14" className="ml-[10px]"><path d="M1 7h13M8.500 1.500L14 7l-5.500 5.500" stroke="#a8a8a8" strokeWidth="1.800" fill="none" /></svg>
            <svg width="16" height="16" viewBox="0 0 16 16" className="ml-[16px]"><path d="M13.500 9A6 6 0 1 1 12 3.500" stroke="#4f4f4f" strokeWidth="1.900" fill="none" /><path d="M14.500 1v5.500H9z" fill="#4f4f4f" /></svg>
            <svg width="16" height="16" viewBox="0 0 16 16" className="ml-[15px]"><path d="M8 1L1 8h2v7h3.500v-4h3v4H13V8h2z" fill="none" stroke="#4f4f4f" strokeWidth="1.700" /></svg>
            <div className="ml-[125px] w-[1253px] h-[29px] bg-white border border-[#c9c8c5] rounded-[3px] flex items-center text-[14.6px]">
              <svg width="14" height="14" viewBox="0 0 14 14" className="ml-[9px]"><circle cx="7" cy="7" r="6" fill="none" stroke="#777" strokeWidth="1.200" /><path d="M7 6v4.500" stroke="#777" strokeWidth="1.500" /><circle cx="7" cy="3.800" r="1" fill="#777" /></svg>
              <span className="ml-[9px] text-[#333]">localhost</span>
              <span className="text-[#8a8a8a]">:5436/notebooks/notebooks/nlp_pipeline.ipynb</span>
              <div className="flex-1" />
              <div className="flex gap-[2px] mr-[14px]"><i className="w-[3.500px] h-[3.500px] rounded-full bg-[#777]" /><i className="w-[3.500px] h-[3.500px] rounded-full bg-[#777]" /><i className="w-[3.500px] h-[3.500px] rounded-full bg-[#777]" /></div>
              <svg width="16" height="16" viewBox="0 0 16 16" className="mr-[10px]"><path d="M1.500 2h13v6a6.500 6.500 0 0 1-13 0z" fill="none" stroke="#777" strokeWidth="1.600" /><path d="M5 6l3 3 3-3" stroke="#777" strokeWidth="1.600" fill="none" /></svg>
              <svg width="17" height="17" viewBox="0 0 17 17" className="mr-[7px]"><path d="M8.500 1.500l2.200 4.600 5 .7-3.600 3.500.9 5-4.500-2.400L4 15.300l.9-5L1.300 6.800l5-.7z" fill="none" stroke="#777" strokeWidth="1.500" /></svg>
            </div>
            <div className="ml-[124px]"><NavIcons /></div>
          </div>
          <div className="flex-1 min-h-0 flex">
            <div className="w-[1841px] shrink-0 flex flex-col relative">
              <Header />
              <Notebook />
              <div className="absolute right-0 top-[850px] w-[5px] h-[32px] bg-[#f29068]" />
            </div>
            <div className="flex-1 bg-[#f2f1ef]">
              <div className="ml-[7px] w-[5px] h-[803px] bg-[#f29068]" />
            </div>
          </div>
        </div>
      </div>
      <div className="absolute left-[1190px] top-[515px] w-[718px] h-[68px] pt-[1px] rounded-[8px] bg-[#b0c4de]/90 flex flex-col items-center justify-center text-center text-[12.07px] leading-[15px] text-[#111] font-['DejaVu_Sans',sans-serif]">
        <div>167839750</div>
        <div className="w-[660px]">Geburtsortstreue oder Abwanderung? Geschlechtsspezifische Abwanderungsstrategien bei neotropischen Fledermäusen</div>
        <div>Geburtsortstreue,Weibchen,Rollenumkehr,Männchen,Abwanderungsverhalten</div>
      </div>
    </div>
  );
}
